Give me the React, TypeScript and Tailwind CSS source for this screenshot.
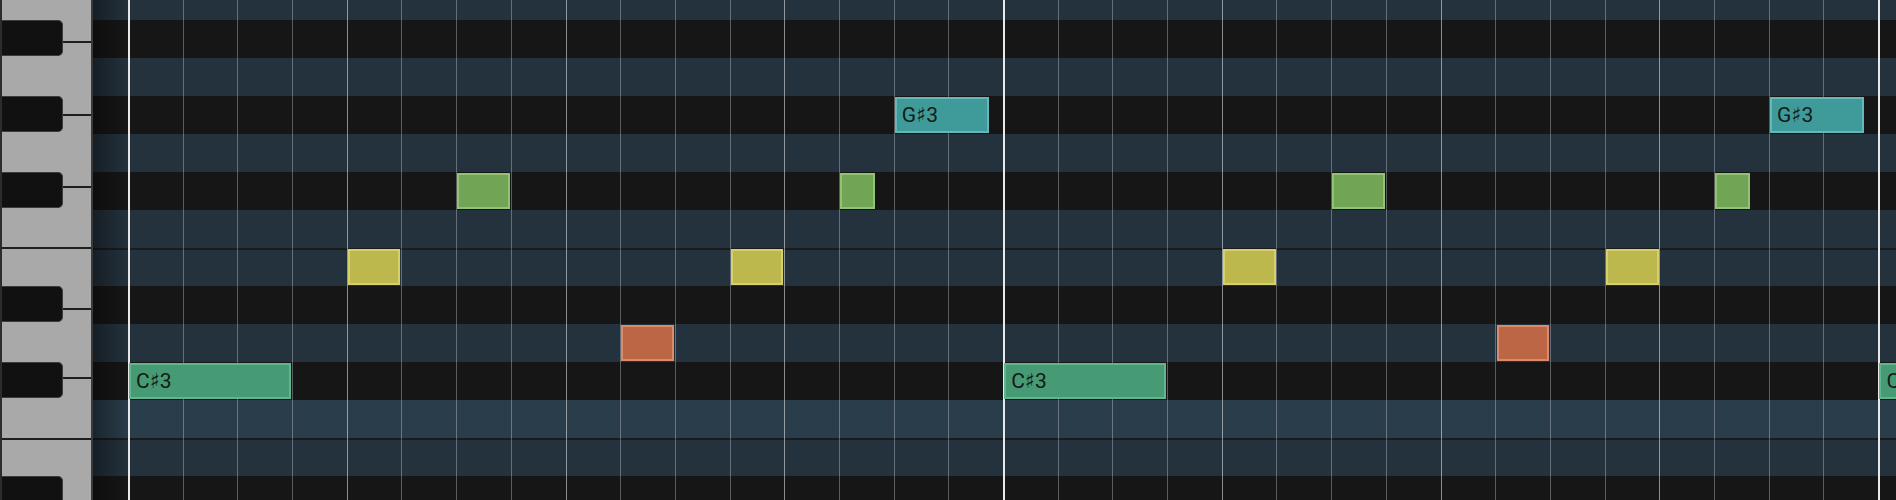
import React from "react";

// Piano-roll editor: keyboard on the left, note grid on the right.

const COL_W = 54.7; // width of one sixteenth step
const ROW_H = 38;
const FIRST_ROW_H = 20;
const GRID_LEAD = 35; // space between the keyboard edge and the first bar line
const COLS = 34;

type RowKind = "light" | "dark" | "root";

const ROWS: { kind: RowKind; sep?: boolean }[] = [
  { kind: "light" }, // B3
  { kind: "dark" }, // A#3
  { kind: "light" }, // A3
  { kind: "dark" }, // G#3
  { kind: "light" }, // G3
  { kind: "dark" }, // F#3
  { kind: "light" }, // F3
  { kind: "light", sep: true }, // E3
  { kind: "dark" }, // D#3
  { kind: "light" }, // D3
  { kind: "dark" }, // C#3
  { kind: "root" }, // C3
  { kind: "light", sep: true }, // B2
  { kind: "dark" }, // A#2
];

const rowTop = (i: number) => (i === 0 ? 0 : FIRST_ROW_H + (i - 1) * ROW_H);

type Tone = "teal" | "green" | "lime" | "yellow" | "orange";

const TONES: Record<Tone, string> = {
  teal: "bg-[#3f9a9a] border-[#66b7b7]",
  green: "bg-[#469b74] border-[#63b58f]",
  lime: "bg-[#71a455] border-[#92c275]",
  yellow: "bg-[#bdb84e] border-[#d5d06c]",
  orange: "bg-[#bd6645] border-[#da8b6c]",
};

type Note = { row: number; col: number; len: number; tone: Tone; label?: string };

const PATTERN: Note[] = [
  { row: 10, col: 0, len: 3, tone: "green", label: "C♯3" },
  { row: 7, col: 4, len: 1, tone: "yellow" },
  { row: 5, col: 6, len: 1, tone: "lime" },
  { row: 9, col: 9, len: 1, tone: "orange" },
  { row: 7, col: 11, len: 1, tone: "yellow" },
  { row: 5, col: 13, len: 0.68, tone: "lime" },
  { row: 3, col: 14, len: 1.75, tone: "teal", label: "G♯3" },
];

const NOTES: Note[] = [0, 1, 2].flatMap((bar) =>
  PATTERN.map((n) => ({ ...n, col: n.col + bar * 16 }))
);

// white-key heights (each includes its 2px bottom divider, the last fills the rest)
const WHITE_KEYS = [43, 73, 72, 61, 61, 69, 61];
const BLACK_KEY_ROWS = [1, 3, 5, 8, 10, 13];

function Keyboard() {
  return (
    <div className="relative h-full w-[93px] shrink-0 border-l-2 border-r-2 border-l-[#2c2c2c] border-r-[#3a3a3a] bg-[#a9a9a9]">
      <div className="flex h-full flex-col">
        {WHITE_KEYS.map((h, i) => (
          <div
            key={i}
            className="shrink-0 border-b-2 border-[#1e1e1e]"
            style={{ height: h }}
          />
        ))}
        <div className="flex-1" />
      </div>
      {BLACK_KEY_ROWS.map((r) => (
        <div
          key={r}
          className="absolute left-0 h-[36px] w-[61px] rounded-r-[5px] border border-l-0 border-[#3c3c3c] bg-[#111111]"
          style={{ top: rowTop(r) }}
        />
      ))}
    </div>
  );
}

function Grid() {
  return (
    <div className="relative h-full flex-1 overflow-hidden">
      {/* row stripes */}
      <div className="flex h-full flex-col">
        {ROWS.map((r, i) => (
          <div
            key={i}
            className={
              "shrink-0 " +
              (r.kind === "dark"
                ? "bg-[#161616]"
                : r.kind === "root"
                ? "bg-[#2a3d4b]"
                : "bg-[#24323d]") +
              (r.sep ? " border-t-2 border-[#1a1b1c]" : "")
            }
            style={{ height: i === 0 ? FIRST_ROW_H : ROW_H }}
          />
        ))}
      </div>

      {/* step, beat and bar lines */}
      <div className="absolute inset-0 flex">
        <div className="w-[35px] shrink-0" />
        {Array.from({ length: COLS }).map((_, i) => (
          <div
            key={i}
            className={
              "h-full w-[54.7px] shrink-0 " +
              (i % 16 === 0
                ? "border-l-2 border-[#e9e9e9]"
                : i % 4 === 0
                ? "border-l border-white/50"
                : "border-l border-white/30")
            }
          />
        ))}
      </div>

      {/* keyboard shadow */}
      <div className="absolute inset-y-0 left-0 w-[36px] bg-gradient-to-r from-black/40 to-transparent" />

      {/* notes */}
      <div className="absolute inset-0">
        {NOTES.map((n, i) => (
          <div
            key={i}
            className={
              "absolute flex h-[36px] items-center overflow-hidden border-2 pl-[5px] " +
              TONES[n.tone]
            }
            style={{
              top: rowTop(n.row) + 1,
              left: GRID_LEAD + n.col * COL_W + 1,
              width: n.len * COL_W - 2,
            }}
          >
            {n.label && (
              <span className="whitespace-nowrap font-['Roboto','DejaVu_Sans',sans-serif] text-[21px] leading-none text-[#141a18]">
                {n.label}
              </span>
            )}
          </div>
        ))}
      </div>
    </div>
  );
}

export default function App() {
  return (
    <div className="flex h-[500px] w-full overflow-hidden bg-[#161616]">
      <Keyboard />
      <Grid />
    </div>
  );
}
